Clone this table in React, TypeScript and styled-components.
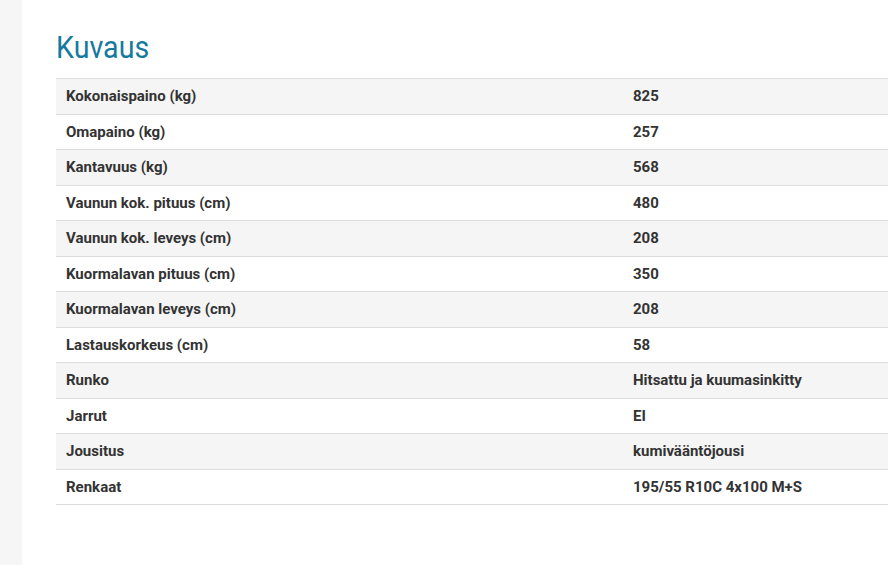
import React from "react";
import styled, { createGlobalStyle } from "styled-components";

const Global = createGlobalStyle`
  html, body { margin: 0; padding: 0; background: #fff; overflow: hidden; }
  body { font-family: Roboto, "Liberation Sans", sans-serif; color: #333; }
`;

const Page = styled.div`
  display: flex;
  min-height: 565px;
  width: 1200px;
`;

const SideStrip = styled.div`
  width: 22px;
  flex: none;
  background: #f6f6f6;
`;

const Content = styled.main`
  flex: 1;
  padding: 28px 0 0 34px;
`;

const Heading = styled.h2`
  display: inline-block;
  margin: 0 0 12px;
  font-family: Roboto, "Liberation Sans", sans-serif;
  font-weight: 400;
  font-size: 32px;
  line-height: 38px;
  color: #18799f;
  transform: scaleX(0.895);
  transform-origin: left center;
`;

const Table = styled.table`
  border-collapse: collapse;
  width: 1134px;
  border-bottom: 1px solid #ddd;
`;

const Row = styled.tr<{ $striped: boolean }>`
  background: ${(p) => (p.$striped ? "#f5f5f5" : "#fff")};
  border-top: 1px solid #ddd;
`;

const Cell = styled.td<{ $first?: boolean }>`
  width: ${(p) => (p.$first ? "547px" : "auto")};
  padding: 8px 10px;
  height: 18.5px;
  line-height: 18.5px;
  font-size: 15px;
  font-weight: 700;
  color: #333;
  vertical-align: middle;
`;

const rows: [string, string][] = [
  ["Kokonaispaino (kg)", "825"],
  ["Omapaino (kg)", "257"],
  ["Kantavuus (kg)", "568"],
  ["Vaunun kok. pituus (cm)", "480"],
  ["Vaunun kok. leveys (cm)", "208"],
  ["Kuormalavan pituus (cm)", "350"],
  ["Kuormalavan leveys (cm)", "208"],
  ["Lastauskorkeus (cm)", "58"],
  ["Runko", "Hitsattu ja kuumasinkitty"],
  ["Jarrut", "EI"],
  ["Jousitus", "kumivääntöjousi"],
  ["Renkaat", "195/55 R10C 4x100 M+S"],
];

export default function App() {
  return (
    <>
      <Global />
      <Page>
        <SideStrip />
        <Content>
          <Heading>Kuvaus</Heading>
          <Table>
            <tbody>
              {rows.map(([k, v], i) => (
                <Row key={k} $striped={i % 2 === 0}>
                  <Cell $first>{k}</Cell>
                  <Cell>{v}</Cell>
                </Row>
              ))}
            </tbody>
          </Table>
        </Content>
      </Page>
    </>
  );
}
